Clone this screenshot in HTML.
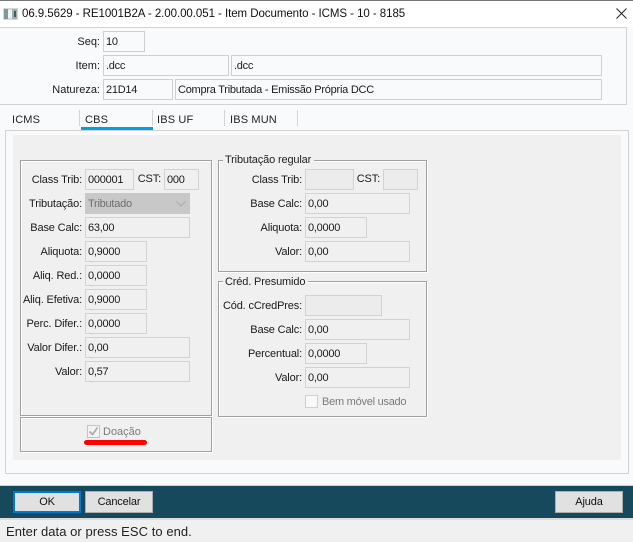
<!DOCTYPE html>
<html><head><meta charset="utf-8"><style>
html,body{margin:0;padding:0;width:633px;height:542px;overflow:hidden;background:#f9fafc}
body{position:relative;font-family:"Liberation Sans",sans-serif;font-size:11px;color:#1a1a1a}
div,span{position:absolute;box-sizing:border-box;white-space:nowrap}
.f{height:21px;border:1px solid #cfcfcf;line-height:21px;padding-left:2px;letter-spacing:-.25px}
.w{background:#f9fafc;height:21px;border:1px solid #cfcfcf}
.e{border-color:#d2d2d2;background:#f0f0f0}
.l{text-align:right;height:16px;line-height:18px;width:82px;letter-spacing:-.15px}
.r{width:82px;left:220px}
.box{border:1px solid #a0a0a0;box-shadow:inset 1px 1px 0 #fff,1px 1px 0 #fff}
.leg{background:#f0f0f0;height:14px;padding:0 3px 0 2px;color:#222;letter-spacing:-.15px}
.tab{top:113px;height:15px;line-height:15px;color:#222;letter-spacing:.15px}
.sep{top:110px;width:1px;height:16px;background:#d5d5d5}
.btn{top:491px;width:68px;height:22px;background:#e1e1e1;border:1px solid #adadad;text-align:center;line-height:20px;color:#111;letter-spacing:-.15px}
</style></head><body>
<div style="left:0;top:0;width:633px;height:27px;background:#fff"></div>
<div style="left:0;top:0;width:633px;height:1px;background:#777"></div>
<svg style="position:absolute;left:3px;top:8px" width="15" height="12"><rect width="15" height="12" fill="#d4dadc"/><rect x="1" y="1" width="4" height="10" fill="#7f9a9c"/><rect x="5" y="2" width="4" height="8" fill="#eef3f3"/><rect x="9" y="1" width="5" height="10" fill="#9fb0b3"/><rect x="11" y="3" width="2" height="6" fill="#44595f"/></svg>
<div style="left:22px;top:6px;height:16px;line-height:16px;font-size:11.5px;color:#111;letter-spacing:-.06px">06.9.5629 - RE1001B2A - 2.00.00.051 - Item Documento - ICMS - 10 - 8185</div>
<svg style="position:absolute;left:616px;top:8px" width="11" height="11"><path d="M.5.5l10 10M10.5.5l-10 10" stroke="#222" stroke-width="1" fill="none"/></svg>

<div style="left:-2px;top:27px;width:629px;height:78px;border:1px solid #d2d2d2;background:#f9fafc"></div>
<div class="l" style="left:18px;top:33px;width:82px;letter-spacing:0">Seq:</div>
<div class="l" style="left:18px;top:57px;letter-spacing:0">Item:</div>
<div class="l" style="left:18px;top:81px;letter-spacing:0">Natureza:</div>
<div class="f w" style="left:103px;top:31px;width:42px">10</div>
<div class="f w" style="left:103px;top:55px;width:126px">.dcc</div>
<div class="f w" style="left:231px;top:55px;width:371px">.dcc</div>
<div class="f w" style="left:103px;top:79px;width:70px">21D14</div>
<div class="f w" style="left:175px;top:79px;width:427px">Compra Tributada - Emissão Própria DCC</div>

<div class="tab" style="left:12px">ICMS</div>
<div class="tab" style="left:85px">CBS</div>
<div class="tab" style="left:157px">IBS UF</div>
<div class="tab" style="left:230px">IBS MUN</div>
<div class="sep" style="left:79px"></div><div class="sep" style="left:152px"></div><div class="sep" style="left:224px"></div><div class="sep" style="left:297px"></div>
<div style="left:81px;top:127px;width:72px;height:3px;background:#00a1e4"></div>

<div style="left:5px;top:130px;width:624px;height:344px;border:1px solid #d2d2d2;background:#f9fafc"></div>
<div style="left:13px;top:135px;width:608px;height:325px;background:#f0f0f0"></div>

<div class="box" style="left:20px;top:160px;width:192px;height:256px"></div>
<div class="box" style="left:20px;top:417px;width:192px;height:35px"></div>
<div class="box" style="left:218px;top:160px;width:209px;height:112px"></div>
<div class="box" style="left:218px;top:281px;width:209px;height:136px"></div>
<div class="leg" style="left:223px;top:153px;line-height:14px">Tributação regular</div>
<div class="leg" style="left:223px;top:275px;line-height:14px">Créd. Presumido</div>

<div class="l" style="left:0;top:171px">Class Trib:</div>
<div class="l" style="left:0;top:195px">Tributação:</div>
<div class="l" style="left:0;top:219px">Base Calc:</div>
<div class="l" style="left:0;top:243px">Aliquota:</div>
<div class="l" style="left:0;top:267px">Aliq. Red.:</div>
<div class="l" style="left:0;top:291px">Aliq. Efetiva:</div>
<div class="l" style="left:0;top:315px">Perc. Difer.:</div>
<div class="l" style="left:0;top:339px">Valor Difer.:</div>
<div class="l" style="left:0;top:363px">Valor:</div>
<div class="l" style="left:137px;top:170px;width:24px">CST:</div>
<div class="f e" style="left:85px;top:169px;width:49px">000001</div>
<div class="f e" style="left:164px;top:169px;width:35px">000</div>
<div class="f" style="left:85px;top:193px;width:105px;background:#c8c8c8;border-color:#c8c8c8;color:#6d6d6d">Tributado</div>
<svg style="position:absolute;left:176px;top:201px" width="10" height="6"><path d="M.5.5l4.5 4.5 4.5-4.5" stroke="#a8a8a8" fill="none"/></svg>
<div class="f e" style="left:85px;top:217px;width:105px">63,00</div>
<div class="f e" style="left:85px;top:241px;width:62px">0,9000</div>
<div class="f e" style="left:85px;top:265px;width:62px">0,0000</div>
<div class="f e" style="left:85px;top:289px;width:62px">0,9000</div>
<div class="f e" style="left:85px;top:313px;width:62px">0,0000</div>
<div class="f e" style="left:85px;top:337px;width:105px">0,00</div>
<div class="f e" style="left:85px;top:361px;width:105px">0,57</div>

<div style="left:87px;top:425px;width:13px;height:13px;background:#f3f3f3;border:1px solid #c4c4c4"></div>
<svg style="position:absolute;left:88px;top:426px" width="11" height="11"><path d="M1.5 5.5l3 3 5-7" stroke="#a9a9a9" stroke-width="1.6" fill="none"/></svg>
<div style="left:103px;top:425px;height:15px;line-height:15px;color:#7b7b7b">Doação</div>
<div style="left:84px;top:440px;width:63px;height:5px;background:#f00;border-radius:3px"></div>

<div class="l r" style="top:171px">Class Trib:</div>
<div class="l r" style="top:195px">Base Calc:</div>
<div class="l r" style="top:219px">Aliquota:</div>
<div class="l r" style="top:243px">Valor:</div>
<div class="l" style="left:356px;top:170px;width:24px">CST:</div>
<div class="f e" style="left:305px;top:169px;width:49px;background:#ececec"></div>
<div class="f e" style="left:383px;top:169px;width:35px;background:#ececec"></div>
<div class="f e" style="left:305px;top:193px;width:105px">0,00</div>
<div class="f e" style="left:305px;top:217px;width:62px">0,0000</div>
<div class="f e" style="left:305px;top:241px;width:105px">0,00</div>

<div class="l r" style="top:297px">Cód. cCredPres:</div>
<div class="l r" style="top:321px">Base Calc:</div>
<div class="l r" style="top:345px">Percentual:</div>
<div class="l r" style="top:369px">Valor:</div>
<div class="f e" style="left:305px;top:295px;width:77px;background:#ececec"></div>
<div class="f e" style="left:305px;top:319px;width:105px">0,00</div>
<div class="f e" style="left:305px;top:343px;width:62px">0,0000</div>
<div class="f e" style="left:305px;top:367px;width:105px">0,00</div>
<div style="left:305px;top:395px;width:13px;height:13px;background:#f9f9f9;border:1px solid #cfcfcf"></div>
<div style="left:322px;top:395px;height:15px;line-height:15px;color:#7b7b7b;letter-spacing:-.25px">Bem móvel usado</div>

<div style="left:0;top:486px;width:633px;height:32px;background:#17495c"></div>
<div style="left:0;top:485px;width:633px;height:1px;background:#d0d0d0"></div>
<div class="btn" style="left:13px;border:2px solid #0078d7;line-height:18px">OK</div>
<div class="btn" style="left:85px">Cancelar</div>
<div class="btn" style="left:555px">Ajuda</div>
<div style="left:0;top:518px;width:633px;height:24px;background:#f0f0f0;border-top:2px solid #dcdcd8"></div>
<div style="left:6px;top:523px;height:17px;line-height:17px;font-size:13px;letter-spacing:.05px;color:#222">Enter data or press ESC to end.</div>
</body></html>
